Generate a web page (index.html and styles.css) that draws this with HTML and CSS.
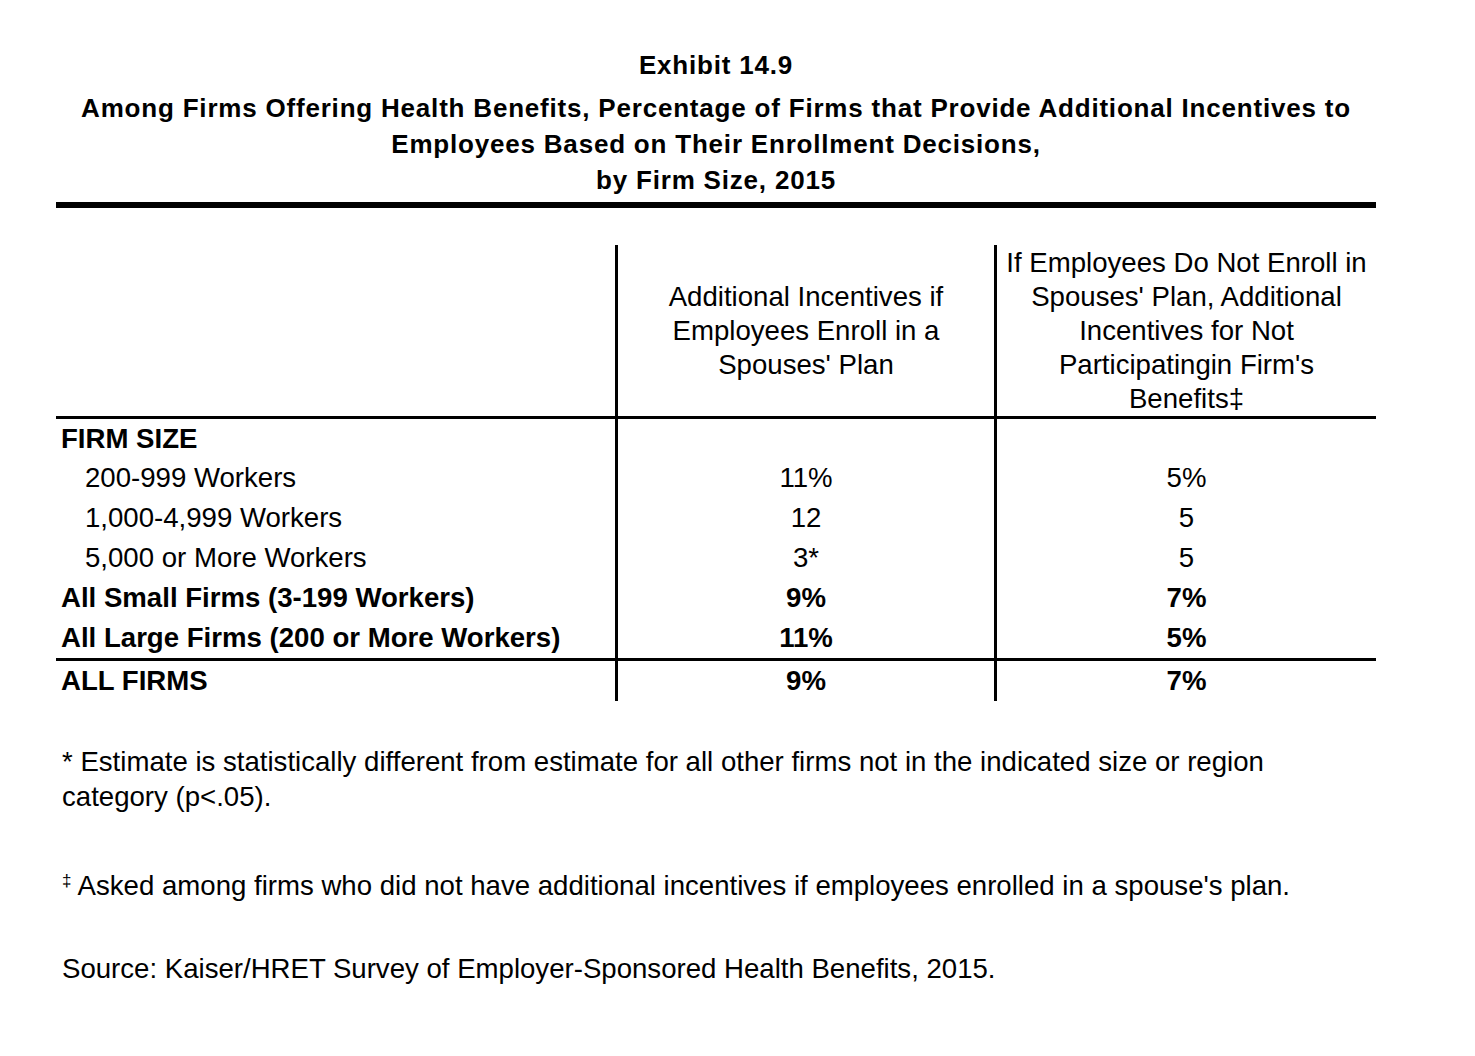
FILE: index.html
```html
<!DOCTYPE html>
<html lang="en">
<head>
<meta charset="utf-8">
<title>Exhibit 14.9</title>
<link rel="stylesheet" href="styles.css">
</head>
<body>
<div class="page">
  <h1 class="exhibit">Exhibit 14.9</h1>
  <h2 class="title">Among Firms Offering Health Benefits, Percentage of Firms that Provide Additional Incentives to<br>Employees Based on Their Enrollment Decisions,<br>by Firm Size, 2015</h2>
  <div class="rule"></div>

  <div class="grid">
    <div class="cell head first"></div>
    <div class="cell head col">Additional Incentives if<br>Employees Enroll in a<br>Spouses' Plan</div>
    <div class="cell head col">If Employees Do Not Enroll in<br>Spouses' Plan, Additional<br>Incentives for Not<br>Participatingin Firm's<br>Benefits‡</div>

    <div class="cell label bold">FIRM SIZE</div>
    <div class="cell col"></div>
    <div class="cell col"></div>

    <div class="cell label sub">200-999 Workers</div>
    <div class="cell col">11%</div>
    <div class="cell col">5%</div>

    <div class="cell label sub">1,000-4,999 Workers</div>
    <div class="cell col">12</div>
    <div class="cell col">5</div>

    <div class="cell label sub">5,000 or More Workers</div>
    <div class="cell col">3*</div>
    <div class="cell col">5</div>

    <div class="cell label bold">All Small Firms (3-199 Workers)</div>
    <div class="cell col bold">9%</div>
    <div class="cell col bold">7%</div>

    <div class="cell label bold">All Large Firms (200 or More Workers)</div>
    <div class="cell col bold">11%</div>
    <div class="cell col bold">5%</div>

    <div class="cell label bold total">ALL FIRMS</div>
    <div class="cell col bold total">9%</div>
    <div class="cell col bold total">7%</div>
  </div>

  <p class="note note1">* Estimate is statistically different from estimate for all other firms not in the indicated size or region<br>category (p&lt;.05).</p>
  <p class="note note2"><sup class="dagger">‡</sup> Asked among firms who did not have additional incentives if employees enrolled in a spouse's plan.</p>
  <p class="note note3">Source: Kaiser/HRET Survey of Employer-Sponsored Health Benefits, 2015.</p>
</div>
</body>
</html>
```

FILE: styles.css
```css
html, body {
  margin: 0;
  padding: 0;
  background: #ffffff;
}

body {
  font-family: "Liberation Sans", Arial, sans-serif;
  color: #000000;
}

.page {
  width: 1320px;
  margin-left: 56px;
  padding-top: 47px;
}

.exhibit {
  margin: 0;
  font-size: 26px;
  letter-spacing: 0.8px;
  font-weight: bold;
  line-height: 36px;
  text-align: center;
}

.title {
  margin: 7px 0 0 0;
  font-size: 26px;
  letter-spacing: 0.8px;
  font-weight: bold;
  line-height: 36px;
  text-align: center;
}

.rule {
  margin-top: 4px;
  height: 6px;
  background: #000000;
}

.grid {
  margin-top: 37px;
  display: grid;
  grid-template-columns: 559px 379px 382px;
  grid-template-rows: 174px 39px 40px 40px 40px 40px 40px 43px;
  font-size: 27.6px;
}

.cell {
  box-sizing: border-box;
  line-height: 40px;
  white-space: nowrap;
}

.col {
  border-left: 3px solid #000000;
  text-align: center;
}

.head {
  border-bottom: 3px solid #000000;
  line-height: 34px;
  display: flex;
  align-items: center;
  justify-content: center;
}

.head.first {
  justify-content: flex-start;
}

.label {
  padding-left: 5px;
}

.sub {
  padding-left: 29px;
}

.bold {
  font-weight: bold;
}

.total {
  border-top: 3px solid #000000;
}

.note {
  margin: 0;
  padding-left: 6px;
  font-size: 27.6px;
  line-height: 35px;
  white-space: nowrap;
}

.note1 {
  margin-top: 43px;
}

.note2 {
  margin-top: 54px;
}

.note3 {
  margin-top: 48px;
}

.dagger {
  font-size: 17px;
  vertical-align: 9px;
  line-height: 0;
}
```
